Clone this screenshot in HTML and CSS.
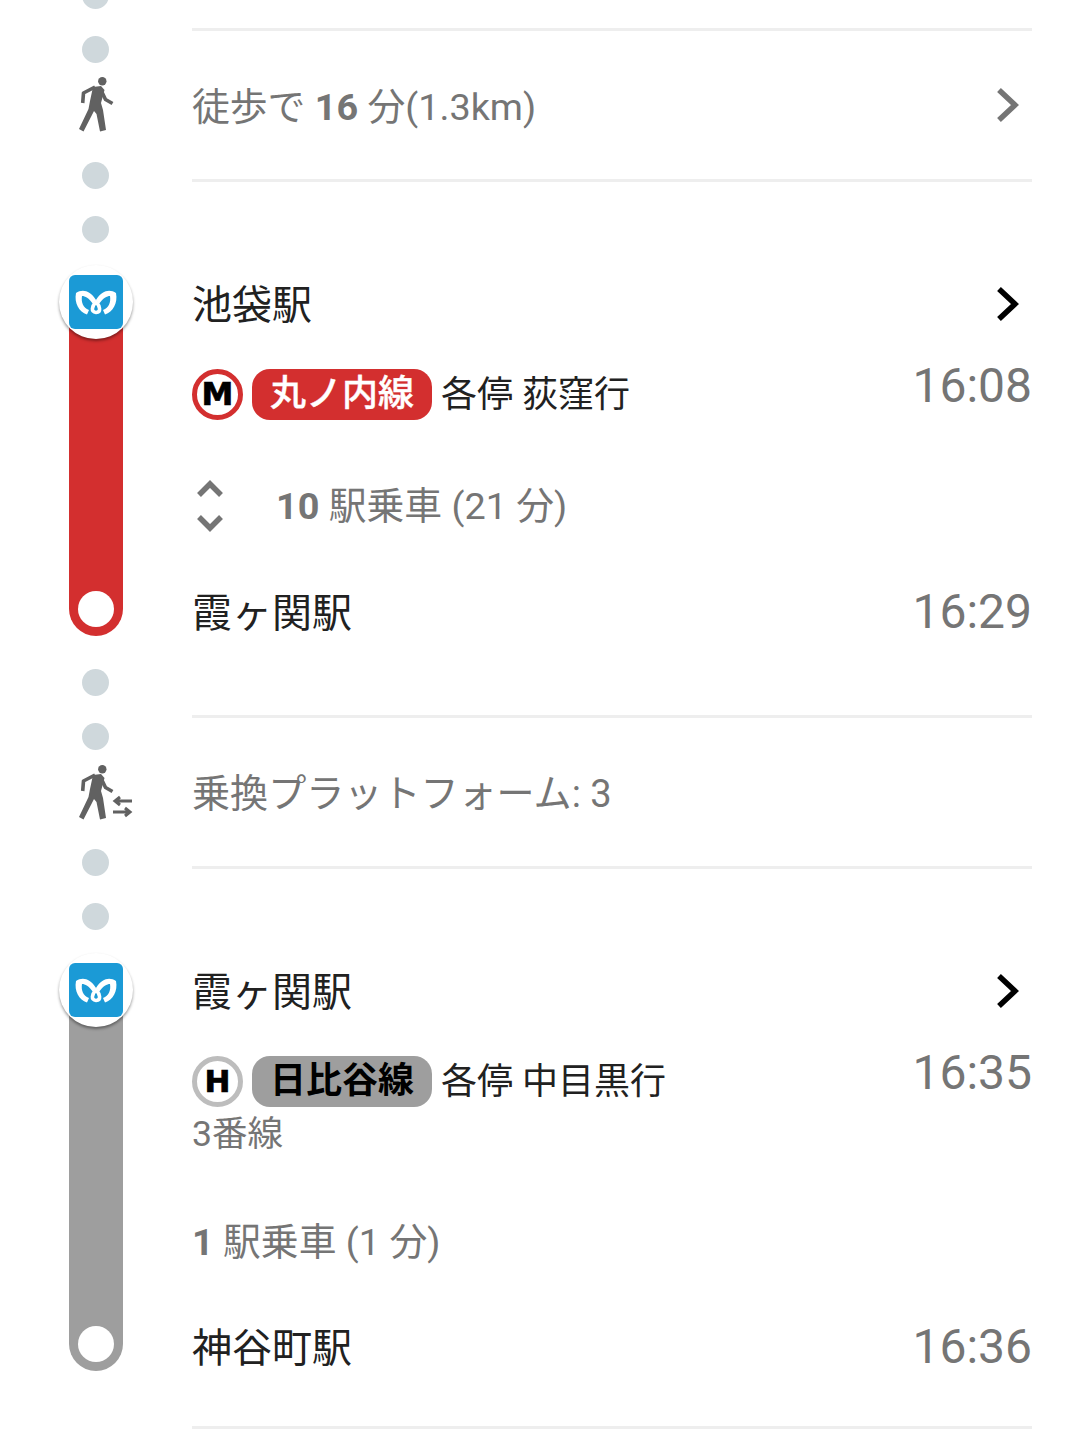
FILE: index.html
```html
<!DOCTYPE html>
<html lang="ja">
<head>
<meta charset="utf-8">
<title>経路</title>
<link rel="stylesheet" href="styles.css">
</head>
<body>
<svg class="defs" width="0" height="0" aria-hidden="true">
  <defs>
    <g id="walker">
      <circle cx="24.3" cy="4.2" r="4.2"/>
      <path class="w-fill" d="M15 10 L23 9 L26.500 13 L23 26 L25 33 L28 53 L22 54.500 L18.500 37 L16 34 L5.500 54.500 L1 52 L10.500 32 L12 24 Z"/>
      <path class="w-limb" d="M17 10 L5.500 16 L4.700 26"/>
      <path class="w-limb" d="M22 11 L27.500 22.500 L34.500 26.500"/>
    </g>
    <g id="metro">
      <rect width="54" height="54" rx="6" fill="#1b9ad6"/>
      <path fill="#fff" d="M7 18 C13 14 21 15 27 25 L24 29 C20 23 16 21 13 21 C12 27 14 33 20 35 L18 39.500 C10 37 5 28 7 18 Z"/>
      <path fill="#fff" d="M47 18 C41 14 33 15 27 25 L30 29 C34 23 38 21 41 21 C42 27 40 33 34 35 L36 39.500 C44 37 49 28 47 18 Z"/>
      <path fill="none" stroke="#fff" stroke-width="3.600" d="M27 27 C23 31 21.500 37 27 37.500 C32.500 37 31 31 27 27 Z"/>
    </g>
  </defs>
</svg>
<main class="page">
  <div class="rail">
    <div class="dots first"><span class="dot"></span><span class="dot"></span></div>
    <svg class="rail-icon walk-icon" width="76" height="56" viewBox="0 0 76 56"><use href="#walker" x="20"/></svg>
    <div class="dots after-walk"><span class="dot"></span><span class="dot"></span></div>
    <div class="bar bar-red">
      <span class="badge"><svg width="54" height="54" viewBox="0 0 54 54"><use href="#metro"/></svg></span>
      <span class="hole"></span>
    </div>
    <div class="dots after-red"><span class="dot"></span><span class="dot"></span></div>
    <svg class="rail-icon transfer-icon" width="76" height="56" viewBox="0 0 76 56">
      <use href="#walker" x="20"/>
      <path class="arrow" d="M74 36 H58 M62 32 L57 36 L62 40 M55 47 H71 M67 43 L72 47 L67 51"/>
    </svg>
    <div class="dots after-transfer"><span class="dot"></span><span class="dot"></span></div>
    <div class="bar bar-grey">
      <span class="badge"><svg width="54" height="54" viewBox="0 0 54 54"><use href="#metro"/></svg></span>
      <span class="hole"></span>
    </div>
  </div>

  <div class="content">
    <hr class="divider">
    <div class="info-row">
      <span class="muted">徒歩で <b>16</b> 分(1.3km)</span>
      <svg class="chevron grey" width="24" height="36" viewBox="0 0 24 36"><path d="M4 3 L20 18 L4 33"/></svg>
    </div>
    <hr class="divider">

    <section class="leg leg-red">
      <div class="station-row">
        <span class="station">池袋駅</span>
        <svg class="chevron dark" width="24" height="36" viewBox="0 0 24 36"><path d="M4 3 L20 18 L4 33"/></svg>
      </div>
      <div class="line-row">
        <div class="line">
          <span class="mark mark-red">M</span>
          <span class="pill pill-red">丸ノ内線</span>
          <span class="line-text">各停 荻窪行</span>
        </div>
        <span class="time time-up">16:08</span>
      </div>
      <div class="stops-row">
        <svg class="updown" width="28" height="52" viewBox="0 0 28 52"><path d="M3 15 L14 4 L25 15 M3 37 L14 48 L25 37"/></svg>
        <span class="muted"><b>10</b> 駅乗車 (21 分)</span>
      </div>
      <div class="arrive-row">
        <span class="station">霞ヶ関駅</span>
        <span class="time">16:29</span>
      </div>
    </section>

    <hr class="divider">
    <div class="info-row">
      <span class="muted muted-wide">乗換プラットフォーム: 3</span>
    </div>
    <hr class="divider">

    <section class="leg leg-grey">
      <div class="station-row station-row-grey">
        <span class="station">霞ヶ関駅</span>
        <svg class="chevron dark" width="24" height="36" viewBox="0 0 24 36"><path d="M4 3 L20 18 L4 33"/></svg>
      </div>
      <div class="line-row line-row-grey">
        <div class="line">
          <span class="mark mark-grey">H</span>
          <span class="pill pill-grey">日比谷線</span>
          <span class="line-text">各停 中目黒行</span>
        </div>
        <span class="time time-up">16:35</span>
      </div>
      <div class="platform">3番線</div>
      <div class="stops-row stops-row-grey">
        <span class="muted"><b>1</b> 駅乗車 (1 分)</span>
      </div>
      <div class="arrive-row arrive-row-grey">
        <span class="station">神谷町駅</span>
        <span class="time">16:36</span>
      </div>
    </section>
    <hr class="divider">
  </div>
</main>
</body>
</html>
```
FILE: styles.css
```css
* { box-sizing: border-box; }
html, body { margin: 0; padding: 0; background: #fff; }
body {
  height: 1440px;
  overflow: hidden;
  font-family: Roboto, "Noto Sans CJK JP", sans-serif;
  color: #212121;
}
.defs { position: absolute; }
.page { display: flex; height: 1440px; }

/* left rail */
.rail { width: 192px; flex: none; display: flex; flex-direction: column; align-items: center; }
.dots { display: flex; flex-direction: column; gap: 27px; margin-right: 1px; }
.dot { display: block; width: 27px; height: 27px; border-radius: 50%; background: #cfd8dc; }
.first { margin-top: -18px; }
.rail-icon { display: block; flex: none; fill: #616161; }
.walk-icon { margin-top: 14px; }
.after-walk { margin-top: 29px; }
.after-red { margin-top: 33px; }
.transfer-icon { margin-top: 15px; }
.after-transfer { margin-top: 28px; }
.w-fill { stroke: none; }
.w-limb { fill: none; stroke: #616161; stroke-width: 3.600; stroke-linejoin: round; }
.arrow { fill: none; stroke: #616161; stroke-width: 3; }

.bar { position: relative; width: 54px; flex: none; border-radius: 0 0 27px 27px; }
.bar-red { height: 334px; margin-top: 59px; background: #d32f2f; }
.bar-grey { height: 381px; margin-top: 60px; background: #9e9e9e; }
.badge {
  position: absolute; left: -10px; top: -37px;
  width: 74px; height: 74px; border-radius: 50%;
  background: #fff;
  box-shadow: 0 2px 3px rgba(0, 0, 0, .4);
  display: flex; align-items: center; justify-content: center;
}
.badge svg { display: block; }
.hole {
  position: absolute; left: 9px; bottom: 9px;
  width: 36px; height: 36px; border-radius: 50%; background: #fff;
}

/* content */
.content { width: 840px; flex: none; padding-top: 28px; }
.divider { margin: 0; height: 3px; border: 0; background: #eeeeee; }
.muted { font-size: 37.800px; line-height: 50px; padding-top: 3px; color: #757575; white-space: nowrap; }
.muted-wide { font-size: 38.100px; }
.muted b { font-weight: 700; }
.info-row {
  height: 148px;
  display: flex; align-items: center; justify-content: space-between;
  padding-right: 13px;
}
.chevron { display: block; fill: none; stroke-width: 5.500; }
.chevron.grey { stroke: #757575; }
.chevron.dark { stroke: #000; }
.station { font-size: 40px; line-height: 54px; padding-top: 4px; color: #212121; white-space: nowrap; }
.station-row {
  height: 75px;
  display: flex; align-items: center; justify-content: space-between;
  padding-right: 13px;
}
.station-row-grey { height: 77px; }
.leg-red { padding-top: 84px; padding-bottom: 56px; }
.leg-grey { padding-top: 83px; padding-bottom: 41px; }
.line-row { height: 106px; display: flex; align-items: center; justify-content: space-between; }
.line-row-grey { height: 104px; }
.line { display: flex; align-items: center; gap: 9px; }
.mark {
  width: 51px; height: 51px; border-radius: 50%;
  background: #fff; border: 5px solid;
  display: flex; align-items: center; justify-content: center;
  font-family: "DejaVu Sans", sans-serif;
  font-weight: 700; color: #000;
  -webkit-text-stroke: .7px #000;
}
.mark-red { border-color: #d32f2f; font-size: 32px; }
.mark-grey { border-color: #bdbdbd; font-size: 31px; }
.pill {
  width: 180px; height: 51px; border-radius: 18px;
  display: flex; align-items: center; justify-content: center;
  font-size: 36px; line-height: 1;
}
.pill-red { background: #d32f2f; color: #fff; font-weight: 500; -webkit-text-stroke: .4px #fff; }
.pill-grey { background: #9e9e9e; color: #000; font-weight: 700; }
.line-text { font-size: 36px; line-height: 50px; padding-top: 2px; color: #212121; white-space: nowrap; }
.time { font-size: 48px; line-height: 56px; color: #757575; }
.time-up { padding-bottom: 16px; }
.stops-row { height: 118px; display: flex; align-items: center; gap: 52px; }
.stops-row .muted { padding-top: 0; }
.updown { display: block; margin-left: 4px; fill: none; stroke: #757575; stroke-width: 5.500; }
.arrive-row { height: 94px; display: flex; align-items: center; justify-content: space-between; }
.platform { margin-top: -24px; font-size: 35.600px; line-height: 50px; color: #757575; }
.stops-row-grey { height: 134px; margin-top: 16px; }
.arrive-row-grey { height: 76px; }
```
